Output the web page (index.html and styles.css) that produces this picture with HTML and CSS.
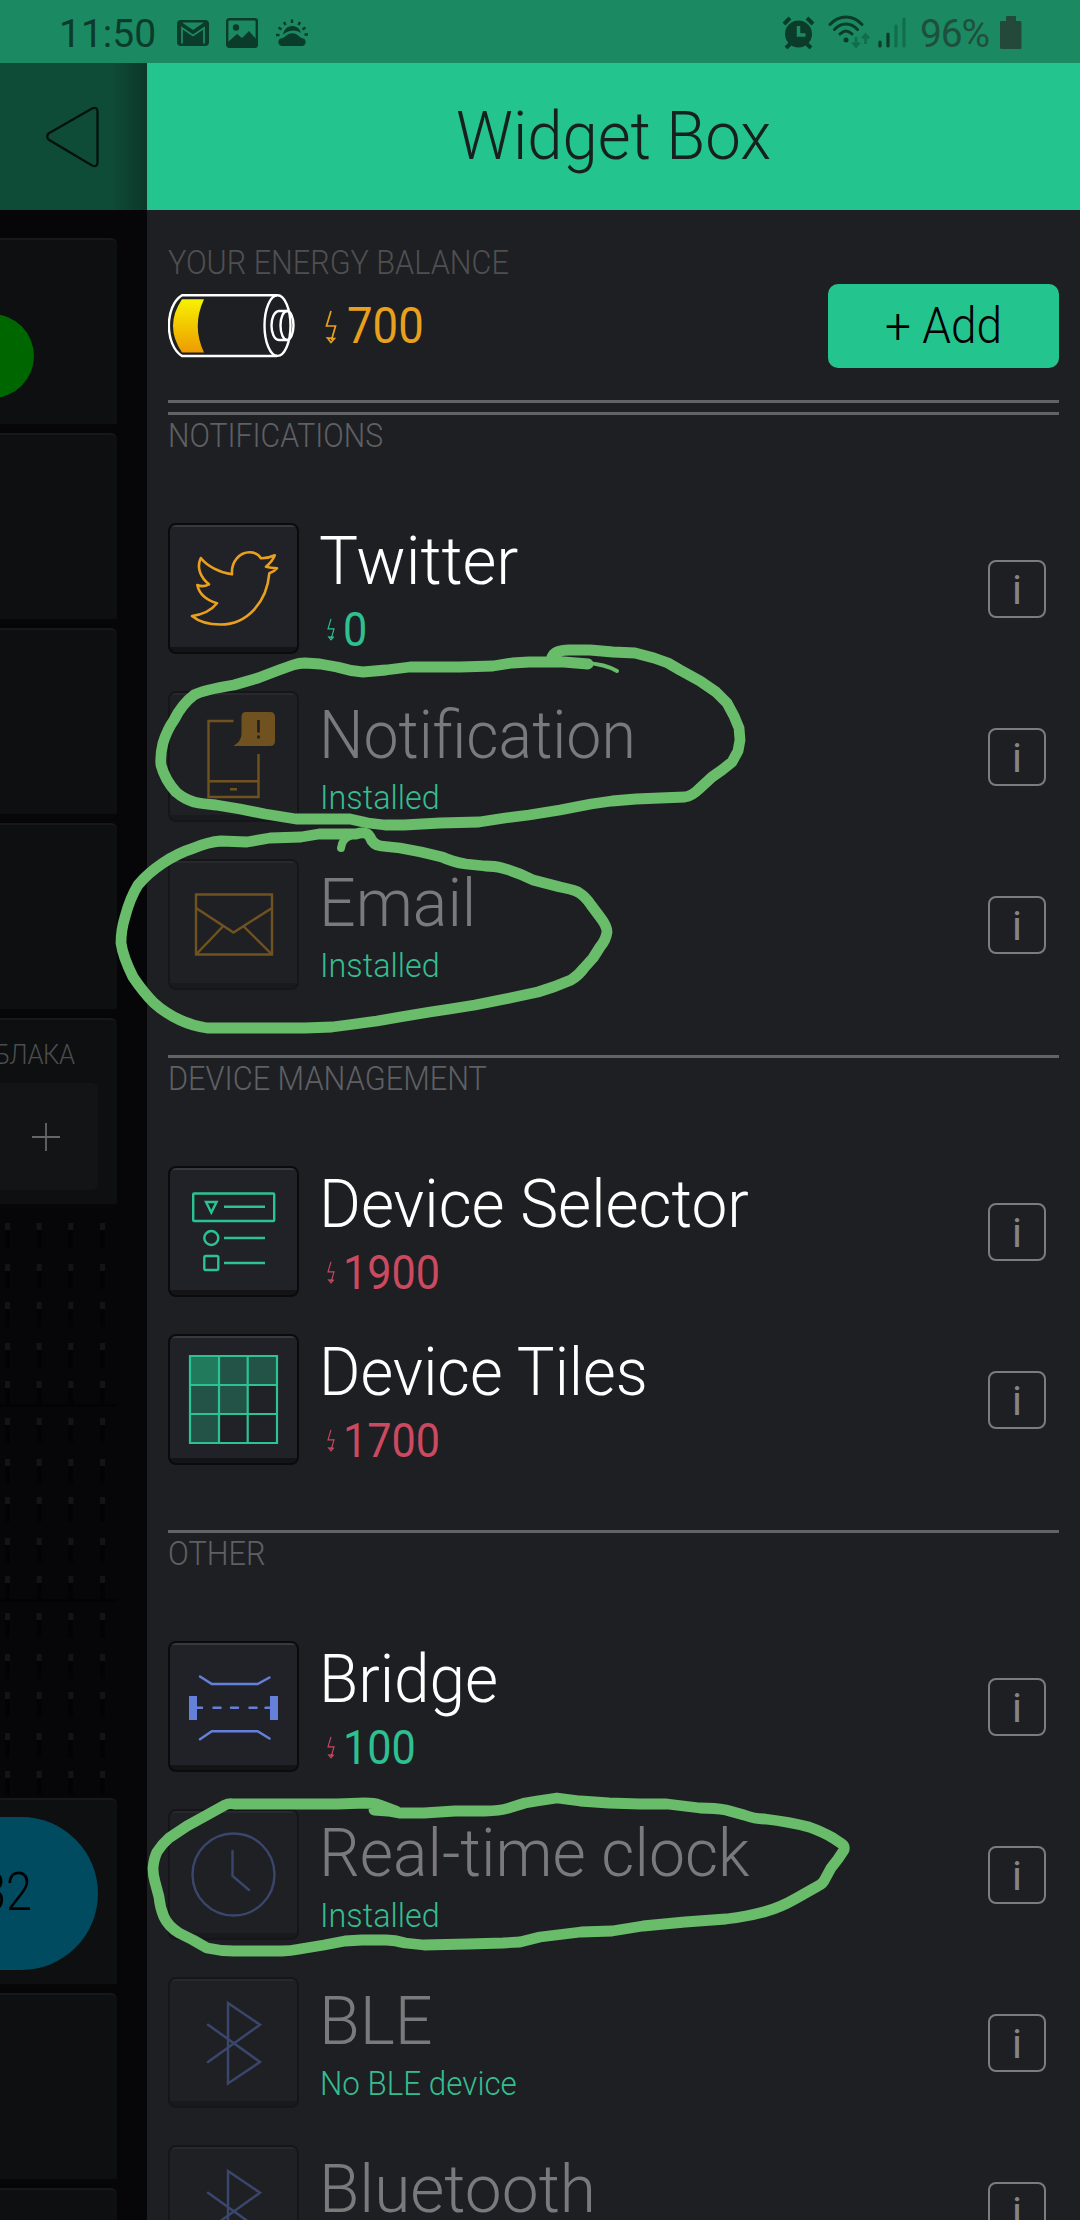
FILE: index.html
```html
<!DOCTYPE html>
<html lang="en">
<head>
<meta charset="utf-8">
<title>Widget Box</title>
<link rel="stylesheet" href="styles.css">
</head>
<body>
<svg class="defs" width="0" height="0" aria-hidden="true">
  <symbol id="bolt" viewBox="0 0 12 34"><path d="M6 1 1.500 16H10.500L6.500 30M2.500 28 6 32.500 9.500 28.500Z" fill="none" stroke="currentColor" stroke-width="1.700"/></symbol>
  <symbol id="bt" viewBox="0 0 131 131"><path d="M40 47.700 92 85 60 106.500V26L92 47.700 40 85" fill="none" stroke="#6480d8" stroke-width="2.500" stroke-linecap="round"/></symbol>
  <pattern id="pegs" x="5" y="0" width="31.700" height="195" patternUnits="userSpaceOnUse">
    <g fill="#030304"><path d="M0 17h5v18H0zM0 58h5v18H0zM0 96h5v18H0zM0 137h5v18H0zM0 175h5v17H0z"/></g>
    <g fill="#131415"><path d="M0 10h5v7H0zM0 51h5v7H0zM0 89h5v7H0zM0 130h5v7H0zM0 168h5v7H0z"/></g>
  </pattern>
</svg>

<div class="screen">
  <header class="status">
    <div class="status-group">
      <span class="clock">11:50</span>
      <svg class="ic-mail" width="32" height="26" viewBox="0 0 32 26"><rect width="32" height="26" rx="4" fill="#0b3b2a"/><path d="M5 23.500V8l11 7.500L27 8v15.500" fill="none" stroke="#1b8a62" stroke-width="1.800"/><path d="M5 2.500h22L16 10z" fill="#1b8a62"/></svg>
      <svg class="ic-pic" width="32" height="30" viewBox="0 0 32 30"><rect x="1.200" y="1.200" width="29.600" height="27.600" rx="2" fill="none" stroke="#0b3b2a" stroke-width="2.400"/><circle cx="10" cy="9.500" r="3.200" fill="#0b3b2a"/><path d="M2 24 11 16l5 4 7-7 8 9v6H2z" fill="#0b3b2a"/></svg>
      <svg class="ic-sun" width="32" height="28" viewBox="0 0 32 28"><path d="M5.500 27a4 4 0 0 1 0-7.800c3 .3 5-5 11-5 5 0 7 4.500 10 5a4 4 0 0 1 0 7.800z" fill="#0b3b2a"/><path d="M7 15.500c1-5 4.500-8.500 9-8.500 4 0 8 2.500 9 7-6-4-12-3-18 1.500z" fill="#0b3b2a"/><path d="M16 .5v3.500M8 3l1.500 3M24 3l-1.500 3M2.500 8.500l3 2M29.500 8.500l-3 2M0 16h3.500M28.500 15.500H32" stroke="#0b3b2a" stroke-width="2.400"/></svg>
    </div>
    <div class="status-group">
      <svg class="ic-alarm" width="33" height="33" viewBox="0 0 33 33"><circle cx="16.500" cy="18" r="13.500" fill="#0b3b2a"/><path d="M2 8 8 2M31 8 25 2M4 32l5-5M29 32l-5-5" stroke="#0b3b2a" stroke-width="4"/><path d="M16.500 10v9h7" fill="none" stroke="#1b8a62" stroke-width="3.500"/></svg>
      <svg class="ic-wifi" width="43" height="34" viewBox="0 0 43 34"><g fill="none" stroke="#0b3b2a" stroke-width="3" stroke-linecap="round"><path d="M2 9.500c9-10 23-10 32 0M6.500 14.500c6.500-7.500 16.500-7.500 23 0M12 19c4-4 8-4 12 0"/></g><circle cx="18" cy="25" r="2.500" fill="#0b3b2a"/><path d="M28 22v9M24.500 27.500 28 31.500l3.500-4M37.500 29v-9M34 23.500l3.500-4 3.500 4" fill="none" stroke="#116e4b" stroke-width="2.600"/></svg>
      <svg class="ic-signal" width="28" height="31" viewBox="0 0 28 31"><g stroke-width="3.200" stroke-linecap="round"><path d="M2 29v-4M10 29V17" stroke="#0b3b2a"/><path d="M18 29V9M26 29V2" stroke="#116e4b"/></g></svg>
      <span class="percent">96%</span>
      <svg class="ic-batt" width="22" height="33" viewBox="0 0 22 33"><path d="M1 5h5V1q0-1 1-1h8q1 0 1 1v4h4q1.500 0 1.500 1.500v25q0 1.500-1.500 1.500H1.500Q0 33 0 31.500V6.500Q0 5 1 5z" fill="#24493b"/></svg>
    </div>
  </header>

  <div class="body">
    <aside class="dash">
      <div class="dash-head">
        <svg width="54" height="62" viewBox="0 0 54 62"><path d="M2.500 27.500 46 2.500q5.500-2 5.500 3v51q0 5-5.500 3L2.500 33.500q-2.500-3 0-6z" fill="none" stroke="#04120d" stroke-width="2.300"/></svg>
      </div>
      <div class="cells">
        <div class="cell"><div class="led"></div></div>
        <div class="cell"></div>
        <div class="cell"></div>
        <div class="cell"></div>
        <div class="cell terminal"><span class="cell-title">БЛАКА</span><div class="plusbox"><svg width="28" height="28" viewBox="0 0 28 28"><path d="M14 0v28M0 14h28" stroke="#666" stroke-width="1.800"/></svg></div></div>
        <div class="pegs"><svg width="117" height="585"><rect width="117" height="585" fill="url(#pegs)"/><path d="M0 192.500H117M0 387.500H117" stroke="#030303" stroke-width="3"/></svg></div>
        <div class="cell"><div class="pill"><span class="t t-pill">32</span></div></div>
        <div class="cell"></div>
        <div class="cell"></div>
      </div>
    </aside>

    <main class="drawer">
      <h1 class="drawer-head"><span class="t t-head">Widget Box</span></h1>
      <div class="content">
        <div class="label energy-label"><span class="t t-energy">YOUR ENERGY BALANCE</span></div>
        <div class="balance">
          <svg width="127" height="64" viewBox="0 0 127 64">
            <defs><linearGradient id="charge" x1="0" y1="0" x2="0" y2="1"><stop offset="0" stop-color="#f6f200"/><stop offset="1" stop-color="#ee9b00"/></linearGradient></defs>
            <path d="M14 5.300H36Q23.500 32 36 58.500H14Q-4 32 14 5.300z" fill="url(#charge)"/>
            <g fill="none" stroke="#fff" stroke-width="2.400"><path d="M109 1.300H14C-3.500 12-3.500 51 14 62H109"/><ellipse cx="109.500" cy="31.600" rx="13" ry="30.300"/><path d="M119 17h-8c-10 1-10 28 0 29h8"/><ellipse cx="119" cy="31.500" rx="6.500" ry="14.500"/></g>
          </svg>
          <svg class="bolt-big" width="12" height="34"><use href="#bolt"/></svg>
          <span class="amount t t-num">700</span>
          <button class="add"><span class="t t-add">+ Add</span></button>
        </div>
        <div class="rule"></div>

        <section>
          <div class="label"><span class="t t-notif">NOTIFICATIONS</span></div>
          <div class="row">
            <div class="tile"><svg viewBox="0 0 131 131"><path d="M24 93C32 92 42 89 49 80.300 38 77 31 70 29.300 62Q35 64.500 41 61.300C33 55 28 45 32.800 35 39 43 52 50 64 51.300 63 38 72 29.300 81.700 29.300 87 29.300 91 32 93 35.300Q100 35.500 106.800 32.300 104 39 98 43.700 103 45 109 45.300 106 49 101.300 50.300C99 78 80 101.500 52.400 101.500 41 101.500 30 98 24 93z" fill="none" stroke="#e8a01e" stroke-width="2.600" stroke-linejoin="round"/></svg></div>
            <div class="info-text"><div class="name"><span class="t t-twitter">Twitter</span></div><div class="price green"><svg class="bolt"><use href="#bolt"/></svg><span class="t t-price">0</span></div></div>
            <div class="info">i</div>
          </div>
          <div class="row off">
            <div class="tile"><svg viewBox="0 0 131 131"><path d="M65.500 30H40.500V106H90.500V63M40.500 90.300H90.500M62 98.300H69" fill="none" stroke="#e8a01e" stroke-width="2.400"/><path d="M78 21h24q5 0 5 5v24q0 5-5 5H65.500q8-5 8-12V26q0-5 4.500-5z" fill="#e8a01e"/><path d="M90.500 29v12.500M90.500 44.500v3" stroke="#1e1f23" stroke-width="2.600"/></svg></div>
            <div class="info-text"><div class="name"><span class="t t-notification">Notification</span></div><div class="state"><span class="t t-inst">Installed</span></div></div>
            <div class="info">i</div>
          </div>
          <div class="row off">
            <div class="tile"><svg viewBox="0 0 131 131"><path d="M28 35.500H104V95.500H28zM28 49 65.500 73.500 104 49M28.500 95 54.800 67.500M103.500 95 75.800 67.500" fill="none" stroke="#e8a01e" stroke-width="2.400"/></svg></div>
            <div class="info-text"><div class="name"><span class="t t-email">Email</span></div><div class="state"><span class="t t-inst">Installed</span></div></div>
            <div class="info">i</div>
          </div>
        </section>

        <section>
          <div class="label"><span class="t t-devman">DEVICE MANAGEMENT</span></div>
          <div class="row">
            <div class="tile"><svg viewBox="0 0 131 131"><g fill="none" stroke="#2cc392" stroke-width="2.400"><rect x="25.200" y="27.500" width="81" height="27.500" rx="1"/><path d="M38 36H48.600L43.300 46.500zM56 40.700H97M56 72H97M56 97H97"/><circle cx="43.300" cy="72" r="7"/><rect x="36.300" y="90" width="14" height="14" rx="1.500"/></g></svg></div>
            <div class="info-text"><div class="name"><span class="t t-selector">Device Selector</span></div><div class="price red"><svg class="bolt"><use href="#bolt"/></svg><span class="t t-price">1900</span></div></div>
            <div class="info">i</div>
          </div>
          <div class="row">
            <div class="tile"><svg viewBox="0 0 131 131"><path d="M22 22H51V51H22z" fill="#217a5c"/><path d="M51 22H109V51H79.500V80H51V109H22V51H51z" fill="#235346"/><path d="M22 22H109V109H22zM51 22V109M79.700 22V109M22 51H109M22 80H109" fill="none" stroke="#2cc392" stroke-width="2.200"/></svg></div>
            <div class="info-text"><div class="name"><span class="t t-tiles">Device Tiles</span></div><div class="price red"><svg class="bolt"><use href="#bolt"/></svg><span class="t t-price">1700</span></div></div>
            <div class="info">i</div>
          </div>
        </section>

        <section>
          <div class="label"><span class="t t-devman">OTHER</span></div>
          <div class="row">
            <div class="tile"><svg viewBox="0 0 131 131"><g fill="none" stroke="#6480d8" stroke-width="2.500" stroke-linecap="round"><path d="M32 35.500 43.800 43H89.600L101.500 36.500M32 98.200 43.800 90.200H89.600L101.500 97.500M29 66.700h5M45.500 66.700h7M63 66.700h7M81.500 66.700h7M97.500 66.700h5"/></g><path d="M21 55h8v24h-8zM102 55h8v24h-8z" fill="#6480d8"/></svg></div>
            <div class="info-text"><div class="name"><span class="t t-bridge">Bridge</span></div><div class="price green"><svg class="bolt warn"><use href="#bolt"/></svg><span class="t t-price">100</span></div></div>
            <div class="info">i</div>
          </div>
          <div class="row off">
            <div class="tile"><svg viewBox="0 0 131 131"><g fill="none" stroke="#6480d8" stroke-width="2.400" stroke-linecap="round"><circle cx="65.500" cy="65.500" r="41"/><path d="M64.500 42V67L81 81"/></g></svg></div>
            <div class="info-text"><div class="name"><span class="t t-rtc">Real-time clock</span></div><div class="state"><span class="t t-inst">Installed</span></div></div>
            <div class="info">i</div>
          </div>
          <div class="row off">
            <div class="tile"><svg><use href="#bt"/></svg></div>
            <div class="info-text"><div class="name"><span class="t t-ble">BLE</span></div><div class="state"><span class="t t-noble">No BLE device</span></div></div>
            <div class="info">i</div>
          </div>
          <div class="row off">
            <div class="tile"><svg><use href="#bt"/></svg></div>
            <div class="info-text"><div class="name"><span class="t t-bluetooth">Bluetooth</span></div></div>
            <div class="info">i</div>
          </div>
        </section>
      </div>
    </main>
  </div>

  <svg class="marker" width="1080" height="2220" viewBox="0 0 1080 2220">
    <g fill="none" stroke="#68bc6a" stroke-width="10.800" stroke-linecap="round" stroke-linejoin="round">
      <path d="M552 657Q555 650 569 650L590 650 613 652 635 653 654 658 668 663 680 670 700 681 716 692 727 703 734 716 739 728 740 740 738 751 732 762 722 770 712 777 699 789Q692 796 685 797L660 798 636 799 612 801 591 804 560 810 529 815 505 818 479 822 440 823 404 825 385 825 368 823 350 819 324 819 296 819 265 814 240 809 216 805Q203 804 194 802 184 799 176 792 165 780 161 765 160 755 163 743 167 730 174 720 182 704 194 695 203 690 234 685L258 678 279 670 293 665Q299 663 305 663L320 664 337 667Q350 671 363 672L386 670 410 667 430 667 460 667 493 666 512 663 529 662 564 662 588 664"/>
      <path d="M586 663Q605 664 617 671" stroke-width="4"/>
      <path d="M341 848Q342 839 350 836" stroke-width="8"/>
      <path d="M356 834Q367 831 370 837 373 845 381 846L400 848 421 852 442 857Q453 862 466 864L485 866Q495 866 502 868 517 872 533 880L560 887Q571 889 578 892 586 897 591 905L600 917Q607 926 607 932 606 940 600 947L593 958 584 968Q579 975 571 980 555 987 538 992L510 998 475 1005 450 1009 430 1012 400 1017 377 1021 355 1024 332 1027 305 1028 279 1028 240 1028 207 1028Q193 1026 180 1020 165 1013 154 1003 143 992 133 977 123 957 121 943 121 930 125 917 130 898 138 885 148 873 163 863 178 853 194 848 208 842 221 841L247 842 270 838 301 837 319 834 356 834"/>
      <path d="M374 1810 388 1811 399 1813 424 1813 455 1811 485 1811Q500 1811 509 1808L525 1803 537 1801 557 1798 580 1801 609 1803 640 1804 667 1804 700 1808Q715 1808 726 1810L744 1815Q755 1819 765 1819 790 1822 809 1827 823 1832 833 1838L842 1844Q845 1846 844 1850L838 1859 831 1868 825 1879Q823 1884 818 1886L795 1899Q781 1907 767 1911 750 1916 726 1919L685 1922 643 1926 612 1931 581 1932 540 1937 520 1942 503 1943 468 1944 424 1945 405 1943Q395 1940 386 1940L362 1940 345 1941 324 1945 300 1949Q290 1951 282 1951L234 1951Q220 1951 207 1948L193 1940 179 1933Q168 1926 164 1917 160 1908 159 1897L155 1882Q153 1875 153 1868 154 1858 157 1852 162 1844 169 1838L187 1826 207 1815 225 1805Q229 1803 234 1804L275 1804 305 1804 337 1804 365 1803Q374 1803 380 1805L396 1811"/>
    </g>
  </svg>
</div>
</body>
</html>
```

FILE: styles.css
```css
* { box-sizing: border-box; }
body {
  margin: 0;
  background: #1e1f23;
  font-family: Roboto, "Liberation Sans", sans-serif;
  font-weight: 300;
}
svg { display: block; flex: none; }
.defs { position: absolute; }
.screen {
  position: relative;
  width: 1080px;
  height: 2220px;
  overflow: hidden;
  display: flex;
  flex-direction: column;
}

/* status bar */
.status {
  height: 63px;
  flex: none;
  background: #1b8a62;
  display: flex;
  justify-content: space-between;
  padding: 0 58px 0 59px;
}
.status-group { display: flex; align-items: flex-start; }
.clock, .percent { font-size: 39px; line-height: 69px; font-weight: 400; color: #0b3b2a; }
.clock { width: 118px; }
.percent { width: 80px; color: #1f4f3d; letter-spacing: -1.200px; }
.ic-mail { margin: 20px 17px 0 0; }
.ic-pic { margin: 18px 18px 0 0; }
.ic-sun { margin-top: 19px; }
.ic-alarm { margin: 16px 13px 0 0; }
.ic-wifi { margin: 15px 7px 0 0; }
.ic-signal { margin: 17px 14px 0 0; }
.ic-batt { margin-top: 16px; }

.body { flex: 1; display: flex; min-height: 0; }

/* dimmed dashboard */
.dash { width: 147px; flex: none; background: #060608; overflow: hidden; }
.dash-head {
  height: 147px;
  padding: 43px 0 0 46px;
  background: linear-gradient(90deg, transparent 110px, rgba(0, 0, 0, .28)), #0f4c38;
}
.cells { padding-top: 28px; width: 117px; }
.cell {
  height: 191px;
  margin-bottom: 4px;
  background: #0d0f10;
  border-top: 2px solid #171819;
  border-bottom: 5px solid #070708;
  border-radius: 0 6px 6px 0;
  overflow: hidden;
}
.led { width: 84px; height: 84px; margin: 74px 0 0 -50px; border-radius: 50%; background: #006600; }
.terminal { display: flex; flex-direction: column; }
.cell-title { align-self: flex-end; margin-right: 43px; height: 63px; line-height: 70px; font-size: 28.500px; letter-spacing: -.5px; color: #4c4d4e; transform: scaleX(.9); transform-origin: right; }
.plusbox { width: 98px; height: 107px; background: #121416; border-radius: 0 6px 6px 0; padding: 40px 0 0 32px; }
.pegs { height: 585px; }
.pill {
  width: 198px; height: 153px;
  margin: 17px 0 0 -100px;
  border-radius: 77px;
  background: #004b60;
  color: #000;
  font-size: 53px;
  line-height: 150px;
  text-align: right;
  padding-right: 66px;
}

/* drawer */
.drawer { flex: 1; background: #1e1f23; }
.drawer-head {
  margin: 0;
  height: 147px;
  background: #24c48e;
  color: #16201f;
  text-align: center;
  font-size: 67.500px;
  font-weight: 300;
  line-height: 146px;
}
.content { padding: 0 21px; }

/* condensed widths, one per string */
.t { display: inline-block; white-space: nowrap; transform-origin: left; }
.t-head { transform: scaleX(.94); transform-origin: center; }
.t-pill { transform: scaleX(.88); transform-origin: right; }
.t-energy { transform: scaleX(.9); }
.t-num { transform: scaleX(.91); }
.t-add { transform: scaleX(.92); }
.t-notif { transform: scaleX(.888); }
.t-devman { transform: scaleX(.903); }
.t-price { transform: scaleX(.9); }
.t-twitter { transform: scaleX(.97); }
.t-notification { transform: scaleX(.927); }
.t-email { transform: scaleX(.955); }
.t-inst { transform: scaleX(.95); }
.t-selector { transform: scaleX(.947); }
.t-tiles { transform: scaleX(.937); }
.t-bridge { transform: scaleX(.947); }
.t-rtc { transform: scaleX(.952); }
.t-ble { transform: scaleX(.985); }
.t-noble { transform: scaleX(.923); }
.t-bluetooth { transform: scaleX(.975); }

.label { height: 108px; font-size: 34px; line-height: 41px; color: #5f6063; }
.energy-label { height: 74px; padding-top: 28px; line-height: 48px; color: #4f4f50; }
.balance { height: 116px; display: flex; align-items: flex-start; padding-top: 10px; color: #e8a01e; }
.bolt-big { margin: 16px 0 0 30px; }
.amount { margin-left: 10px; font-size: 50px; line-height: 64px; font-weight: 400; }
.add {
  margin: -10px 0 0 auto;
  width: 231px; height: 84px;
  border: 0;
  border-radius: 10px;
  background: #24c48e;
  color: #000;
  font: 300 50px/82px Roboto, "Liberation Sans", sans-serif;
  padding: 0 0 0 57px;
  text-align: left;
}
.rule { height: 3px; background: #626366; margin-bottom: 9px; }
section { border-top: 3px solid #626366; padding-bottom: 28px; }

.row { display: flex; height: 168px; }
.tile {
  width: 131px; height: 131px;
  flex: none;
  border: 2px solid #0b0b0d;
  border-radius: 8px;
  background: linear-gradient(#38393c 2px, #212227 2px, #212227 122px, #141416 122px);
}
.tile svg { width: 131px; height: 131px; margin: -2px; }
.off .tile { opacity: .4; }
.info-text { flex: 1; padding: 3px 0 0 20px; }
.off .info-text { padding-top: 9px; }
.name { font-size: 67.500px; line-height: 70px; height: 70px; color: #fff; }
.off .name { color: #7a7a7c; }
.price { display: flex; margin-top: 10px; font-size: 48px; line-height: 48px; font-weight: 400; }
.state { margin-top: 7px; padding-left: 1px; font-size: 34px; line-height: 40px; color: #35bd90; }
.bolt { width: 8px; height: 23px; margin: 12px 8px 0 8px; }
.green { color: #2fc091; }
.red, .warn { color: #cb4a60; }
.info {
  width: 58px; height: 58px;
  margin: 37px 13px 0 0;
  border: 2.500px solid #7c7c7d;
  border-radius: 8px;
  color: #858586;
  font-size: 41px;
  line-height: 56px;
  font-weight: 400;
  text-align: center;
}

/* hand-drawn highlights over the page */
.marker { position: absolute; left: 0; top: 0; }
```
